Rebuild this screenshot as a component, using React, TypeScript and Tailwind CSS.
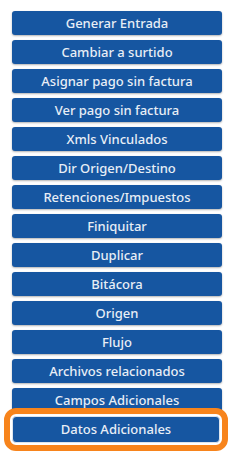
import React from 'react';

const labels = [
  'Generar Entrada',
  'Cambiar a surtido',
  'Asignar pago sin factura',
  'Ver pago sin factura',
  'Xmls Vinculados',
  'Dir Origen/Destino',
  'Retenciones/Impuestos',
  'Finiquitar',
  'Duplicar',
  'Bitácora',
  'Origen',
  'Flujo',
  'Archivos relacionados',
  'Campos Adicionales',
];

const App = () => {
  return (
    <div className="w-[234px] h-[457px] bg-white font-['Noto_Sans',sans-serif]">
      <div className="flex flex-col gap-[5px] pt-[11px] pl-[12px]">
        {labels.map((label) => (
          <button
            key={label}
            className="w-[210px] h-[24px] rounded-[3px] bg-[#1656a1] text-[#e8eef6] text-[13px] font-medium leading-none shadow-[0_1px_2px_rgba(0,0,0,0.3)]"
          >
            {label}
          </button>
        ))}
        <button className="mt-[-1px] w-[208px] h-[27px] rounded-[4px] border border-[#dde5ee] bg-[#1656a1] text-[#e8eef6] text-[13px] font-medium leading-none outline-[6px] outline-solid outline-offset-[2px] outline-[#f7841c]">
          Datos Adicionales
        </button>
      </div>
    </div>
  );
};

export default App;
